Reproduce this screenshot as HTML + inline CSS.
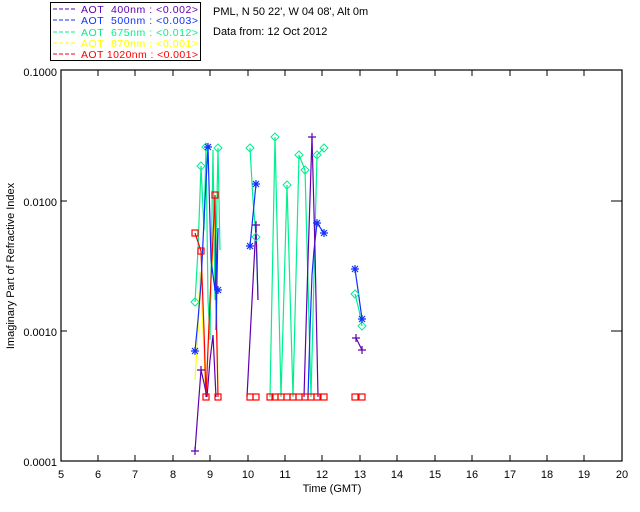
<!DOCTYPE html>
<html><head><meta charset="utf-8"><style>
html,body{margin:0;padding:0;background:#fff;}
svg{display:block;}
text{font-family:"Liberation Sans",sans-serif;font-size:11px;}
.m{font-size:10.5px;white-space:pre;}
</style></head><body>
<svg width="640" height="512" viewBox="0 0 640 512" xmlns="http://www.w3.org/2000/svg" xml:space="preserve">
<rect width="640" height="512" fill="#fff"/>
<rect x="50.5" y="2.5" width="150" height="58" fill="none" stroke="#000" stroke-width="1"/>
<line x1="53" y1="9" x2="75" y2="9" stroke="#6000b0" stroke-dasharray="4,2"/>
<text class="m" x="81" y="13" fill="#6000b0" textLength="117" lengthAdjust="spacing">AOT  400nm : &lt;0.002&gt;</text>
<line x1="53" y1="20" x2="75" y2="20" stroke="#1030ff" stroke-dasharray="4,2"/>
<text class="m" x="81" y="24" fill="#1030ff" textLength="117" lengthAdjust="spacing">AOT  500nm : &lt;0.003&gt;</text>
<line x1="53" y1="32" x2="75" y2="32" stroke="#00f090" stroke-dasharray="4,2"/>
<text class="m" x="81" y="36" fill="#00f090" textLength="117" lengthAdjust="spacing">AOT  675nm : &lt;0.012&gt;</text>
<line x1="53" y1="43" x2="75" y2="43" stroke="#ffff00" stroke-dasharray="4,2"/>
<text class="m" x="81" y="47" fill="#ffff00" textLength="117" lengthAdjust="spacing">AOT  870nm : &lt;0.001&gt;</text>
<line x1="53" y1="54" x2="75" y2="54" stroke="#ff0000" stroke-dasharray="4,2"/>
<text class="m" x="81" y="58" fill="#ff0000" textLength="117" lengthAdjust="spacing">AOT 1020nm : &lt;0.001&gt;</text>
<text x="213" y="15">PML, N 50 22', W 04 08', Alt 0m</text>
<text x="213" y="35">Data from: 12 Oct 2012</text>
<rect x="61" y="70" width="561" height="391" fill="none" stroke="#000" stroke-width="1.2"/>
<g stroke="#000" stroke-width="1">
<path d="M98,461v-6M135,461v-6M173,461v-6M210,461v-6M248,461v-6M285,461v-6M322,461v-6M360,461v-6M397,461v-6M435,461v-6M472,461v-6M510,461v-6M547,461v-6M584,461v-6"/>
<path d="M98,70v6M135,70v6M173,70v6M210,70v6M248,70v6M285,70v6M322,70v6M360,70v6M397,70v6M435,70v6M472,70v6M510,70v6M547,70v6M584,70v6"/>
<path d="M61,201h6M61,331h6M622,201h-11M622,331h-11"/>
</g>
<g font-size="10.5" text-anchor="middle">
<text x="61" y="478">5</text><text x="98" y="478">6</text><text x="135" y="478">7</text><text x="173" y="478">8</text><text x="210" y="478">9</text><text x="248" y="478">10</text><text x="285" y="478">11</text><text x="322" y="478">12</text><text x="360" y="478">13</text><text x="397" y="478">14</text><text x="435" y="478">15</text><text x="472" y="478">16</text><text x="510" y="478">17</text><text x="547" y="478">18</text><text x="584" y="478">19</text><text x="622" y="478">20</text>
<text x="332" y="492">Time (GMT)</text>
</g>
<g font-size="10.5" text-anchor="end">
<text x="57" y="76">0.1000</text><text x="57" y="206">0.0100</text><text x="57" y="336">0.0010</text><text x="57" y="466">0.0001</text>
</g>
<text transform="translate(14,266) rotate(-90)" text-anchor="middle" font-size="10.5">Imaginary Part of Refractive Index</text>
<g fill="none" stroke-width="1.2">
<polyline stroke="#00f090" points="195,302 198,250 201,166 204,230 206,147 208,300 210,340 213,150 215,300 218,148 220,250"/>
<polyline stroke="#00f090" points="250,148 253,200 256,237 258,300"/>
<polyline stroke="#00f090" points="270,397 275,137 281,397 287,185 293,397 299,155 305,170 311,397 317,155 324,148"/>
<polyline stroke="#00f090" points="355,294 359,310 362,326"/>
<polyline stroke="#ffff00" points="195,380 198,330 200,272 203,330 206,397 210,300 215,215 217,300 218,397"/>
<polyline stroke="#ff0000" points="195,233 201,251 204,330 206,397 210,300 215,195 216,300 218,397"/>
<polyline stroke="#1030ff" points="195,351 198,320 201,283 205,200 208,147 211,260 215,290 218,228 216,330"/>
<polyline stroke="#1030ff" points="250,246 253,215 256,184"/>
<polyline stroke="#1030ff" points="308,397 310,330 312,275 314,250 317,223 324,233"/>
<polyline stroke="#1030ff" points="355,269 358,290 362,319"/>
<polyline stroke="#6000b0" points="195,451 198,410 201,370 204,383 207,397 210,360 213,335 216,397"/>
<polyline stroke="#6000b0" points="247,397 251,320 256,225 258,300"/>
<polyline stroke="#6000b0" points="304,397 308,260 312,137 315,250 318,397"/>
<polyline stroke="#6000b0" points="356,338 362,350"/>
</g>
<g fill="none" stroke="#ff0000" stroke-width="1.2">
<rect x="192" y="230" width="6" height="6"/><rect x="198" y="248" width="6" height="6"/><rect x="212" y="192" width="6" height="6"/>
<rect x="203" y="394" width="6" height="6"/><rect x="215" y="394" width="6" height="6"/><rect x="247" y="394" width="6" height="6"/><rect x="253" y="394" width="6" height="6"/>
<rect x="267" y="394" width="6" height="6"/><rect x="272" y="394" width="6" height="6"/><rect x="278" y="394" width="6" height="6"/><rect x="284" y="394" width="6" height="6"/><rect x="290" y="394" width="6" height="6"/><rect x="296" y="394" width="6" height="6"/><rect x="302" y="394" width="6" height="6"/><rect x="308" y="394" width="6" height="6"/><rect x="314" y="394" width="6" height="6"/><rect x="321" y="394" width="6" height="6"/>
<rect x="352" y="394" width="6" height="6"/><rect x="359" y="394" width="6" height="6"/>
</g>
<g fill="none" stroke="#00f090">
<path d="M201,162l4,4-4,4-4-4z M206,143l4,4-4,4-4-4z M218,144l4,4-4,4-4-4z M195,298l4,4-4,4-4-4z M250,144l4,4-4,4-4-4z M256,233l4,4-4,4-4-4z M275,133l4,4-4,4-4-4z M287,181l4,4-4,4-4-4z M299,151l4,4-4,4-4-4z M305,166l4,4-4,4-4-4z M317,151l4,4-4,4-4-4z M324,144l4,4-4,4-4-4z M355,290l4,4-4,4-4-4z M362,322l4,4-4,4-4-4z"/>
</g>
<g stroke="#1030ff" stroke-width="1.2">
<path d="M191,351h8M195,347v8M192,348l6,6M198,348l-6,6 M204,147h8M208,143v8M205,144l6,6M211,144l-6,6 M214,290h8M218,286v8M215,287l6,6M221,287l-6,6 M246,246h8M250,242v8M247,243l6,6M253,243l-6,6 M252,184h8M256,180v8M253,181l6,6M259,181l-6,6 M313,223h8M317,219v8M314,220l6,6M320,220l-6,6 M320,233h8M324,229v8M321,230l6,6M327,230l-6,6 M351,269h8M355,265v8M352,266l6,6M358,266l-6,6 M358,319h8M362,315v8M359,316l6,6M365,316l-6,6"/>
</g>
<g stroke="#6000b0" stroke-width="1.2">
<path d="M191,451h8M195,447v8 M197,370h8M201,366v8 M252,225h8M256,221v8 M308,137h8M312,133v8 M352,338h8M356,334v8 M358,350h8M362,346v8"/>
</g>
</svg>
</body></html>
